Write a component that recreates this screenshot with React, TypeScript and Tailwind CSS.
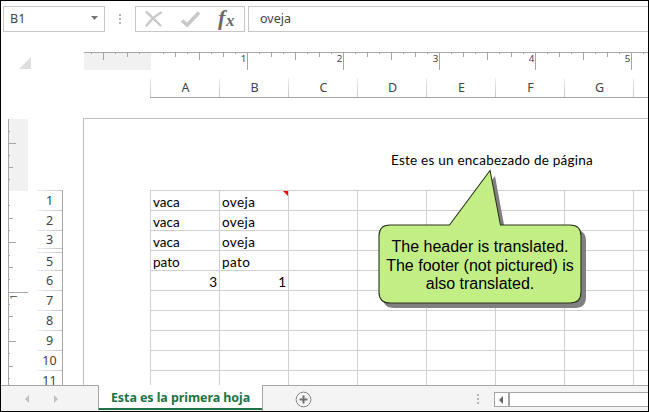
import React from "react";

const columns = ["A", "B", "C", "D", "E", "F", "G", ""];

const rows: { label: string; height: string; cells: string[]; numeric?: boolean }[] = [
  { label: "1", height: "h-5", cells: ["vaca", "oveja"] },
  { label: "2", height: "h-5", cells: ["vaca", "oveja"] },
  { label: "3", height: "h-5", cells: ["vaca", "oveja"] },
  { label: "5", height: "h-5", cells: ["pato", "pato"] },
  { label: "6", height: "h-5", cells: ["3", "1"], numeric: true },
  { label: "7", height: "h-5", cells: [] },
  { label: "8", height: "h-5", cells: [] },
  { label: "9", height: "h-5", cells: [] },
  { label: "10", height: "h-5", cells: [] },
  { label: "11", height: "h-5", cells: [] },
];

// Row headers; the hidden row 4 leaves a thin gap between 3 and 5.
const rowHeaders = [
  { label: "1", size: "h-5" },
  { label: "2", size: "h-5" },
  { label: "3", size: "h-[18px]" },
  { label: "", size: "h-1" },
  { label: "5", size: "h-[18px]" },
  { label: "6", size: "h-5" },
  { label: "7", size: "h-5" },
  { label: "8", size: "h-5" },
  { label: "9", size: "h-5" },
  { label: "10", size: "h-5" },
  { label: "11", size: "h-5" },
];

// Eighth-inch marks, alternating eighth, quarter, eighth, half.
function HorizontalRuler() {
  const ticks = Array.from({ length: 47 }, (_, i) => i - 5);
  return (
    <svg width="564" height="18" className="block" shapeRendering="crispEdges">
      <rect x="0" y="0" width="67" height="18" fill="#f1f1f1" />
      <rect x="0" y="0" width="564" height="1" fill="#a6a6a6" />
      {ticks.map((t) => {
        if (t === 0) return null;
        const h = t > 0 && t % 8 === 0 ? 18 : t % 4 === 0 ? 8 : t % 2 === 0 ? 5 : 2;
        return <rect key={t} x={67 + t * 12} y="0" width="1" height={h} fill="#a6a6a6" />;
      })}
      {[1, 2, 3, 4, 5].map((n) => (
        <text key={n} x={66.3 + n * 96} y="10.3" textAnchor="end" fontSize="9.8" fill="#444" fontFamily="Noto Sans, sans-serif">
          {n}
        </text>
      ))}
    </svg>
  );
}

function VerticalRuler() {
  const ticks = [
    [12, 2], [24, 8], [36, 2], [48, 5], [60, 2], [86, 2], [99, 5], [111, 2], [123, 8], [136, 2],
    [148, 5], [160, 2], [173, 20], [185, 2], [197, 5], [210, 2], [222, 8], [234, 2], [247, 5], [259, 2],
  ];
  return (
    <svg width="20" height="266" className="block" shapeRendering="crispEdges">
      <rect x="0" y="0" width="20" height="72" fill="#f1f1f1" />
      <rect x="0" y="0" width="1" height="266" fill="#a6a6a6" />
      {ticks.map(([y, w]) => (
        <rect key={y} x="0" y={y} width={w} height="1" fill="#a6a6a6" />
      ))}
      <text transform="translate(9 180.5) rotate(-90)" fontSize="9.5" fill="#444" fontFamily="Noto Sans, sans-serif">
        1
      </text>
    </svg>
  );
}

function Dots() {
  return (
    <div className="flex flex-col gap-[2px]">
      <i className="size-[2px] bg-[#b4b4b4]" />
      <i className="size-[2px] bg-[#b4b4b4]" />
      <i className="size-[2px] bg-[#b4b4b4]" />
    </div>
  );
}

function FormulaBar() {
  return (
    <div className="mt-[5px] ml-[2px] flex h-[26px] items-stretch">
      <div className="flex w-[102px] items-center justify-between border border-[#c6c6c6] pr-[6px] pl-[6px] text-[12.5px] text-[#444]">
        <span className="pt-px font-['Noto_Sans',sans-serif]">B1</span>
        <svg width="7" height="4" className="-mt-[3px]"><path d="M0 0h7L3.5 4z" fill="#777" /></svg>
      </div>
      <div className="flex w-[30px] items-center pl-[14px]"><Dots /></div>
      <div className="w-[110px] border border-[#c6c6c6]">
        <svg width="108" height="24" className="block">
          <path d="M10.5 5.2Q16.5 10.5 24.5 18.5M25 5.5Q18 9.5 10.5 18.5" fill="none" stroke="#c8c8c8" strokeWidth="2.4" strokeLinecap="round" />
          <path d="M46 13.5l5.2 4.5L63 5.5" fill="none" stroke="#c8c8c8" strokeWidth="3.6" />
          <text x="82" y="18" fontFamily="Liberation Serif, serif" fontStyle="italic" fontWeight="bold" fontSize="22" fill="#6a6a6a">f</text>
          <text x="90" y="18.5" fontFamily="Liberation Serif, serif" fontStyle="italic" fontWeight="bold" fontSize="17" fill="#6a6a6a">x</text>
        </svg>
      </div>
      <div className="ml-[3px] flex flex-1 items-center border-y border-l border-[#c6c6c6] pt-px pl-[11px] font-['Noto_Sans',sans-serif] text-[12.5px] text-[#444]">
        oveja
      </div>
    </div>
  );
}

function Callout() {
  return (
    <div className="absolute top-[168px] left-[377px] h-[140px] w-[212px]">
      <svg width="212" height="140" className="absolute inset-0">
        <path
          d="M16 61H76L117 7L127 61H197Q208 61 208 72V128Q208 139 197 139H16Q5 139 5 128V72Q5 61 16 61Z"
          fill="#808080"
        />
        <path
          d="M12 56H71.5L112 1.5L122.5 56H192Q203 56 203 67V123Q203 134 192 134H12Q1 134 1 123V67Q1 56 12 56Z"
          fill="#c3ee86"
          stroke="#2b331c"
          strokeWidth="1.1"
        />
      </svg>
      <p className="relative mt-[69px] w-[204px] text-center font-['Liberation_Sans',sans-serif] text-[16px] leading-[18.5px] text-black">
        The header is translated.
        <br />
        The footer (not pictured) is
        <br />
        also translated.
      </p>
    </div>
  );
}

function SheetTabs() {
  return (
    <div className="flex h-[26px] bg-[#f4f4f4]">
      <div className="flex w-[97px] items-center gap-[25px] border-t border-[#a6a6a6] pl-[24px]">
        <svg width="4" height="8"><path d="M4 0v8L0 4z" fill="#c0c0c0" /></svg>
        <svg width="4" height="8"><path d="M0 0v8l4-4z" fill="#c0c0c0" /></svg>
      </div>
      <div className="flex h-[25px] w-[164px] items-center justify-center border-b-2 border-l border-b-[#217346] border-l-[#a6a6a6] bg-white pt-[3px] font-['Noto_Sans',sans-serif] text-[12.5px] font-bold tracking-[-0.08px] whitespace-nowrap text-[#217346]">
        Esta es la primera hoja
      </div>
      <div className="flex flex-1 border-t border-l border-[#a6a6a6]">
        <svg width="17" height="17" className="mt-[5px] ml-[32px]">
          <circle cx="8.5" cy="8.5" r="7.4" fill="none" stroke="#858585" />
          <path d="M4.5 8.5h8M8.5 4.5v8" stroke="#707070" strokeWidth="2" />
        </svg>
        <div className="mt-[8px] ml-[165px]"><Dots /></div>
        <div className="mt-[6px] ml-[15px] flex h-[15px] flex-1 border-y border-l border-[#a6a6a6] bg-white">
          <div className="flex w-[15px] items-center border-r-2 border-[#a6a6a6] pl-[4px]">
            <svg width="4" height="8"><path d="M4 0v8L0 4z" fill="#666" /></svg>
          </div>
        </div>
      </div>
    </div>
  );
}

export default function App() {
  return (
    <div className="relative flex h-[412px] w-[649px] flex-col overflow-hidden border border-black bg-white">
      <FormulaBar />

      <div className="mt-5 flex h-[18px] shrink-0">
        <div className="w-[83px] shrink-0">
          <svg width="12" height="12" className="mt-[5px] ml-[18px]"><path d="M12 0v12H0z" fill="#dfdfdf" /></svg>
        </div>
        <HorizontalRuler />
      </div>

      <div className="mt-2 ml-[149px] flex h-5 shrink-0 overflow-hidden border-b border-[#a6a6a6]">
        {columns.map((c, i) => (
          <div key={i} className="flex w-[69px] shrink-0">
            <div className="w-px bg-linear-to-b from-[#eeeeee] to-[#c6c6c6]" />
            <div className="flex flex-1 items-center justify-center pt-px pl-px font-['Noto_Sans',sans-serif] text-[12.5px] text-[#444]">{c}</div>
          </div>
        ))}
      </div>

      <div className="mt-5 flex h-[267px] shrink-0 overflow-hidden">
        <div className="mt-px ml-[7px]"><VerticalRuler /></div>
        <div className="mt-[72px] ml-[9px] w-[26px] shrink-0 border-r border-[#a6a6a6]">
          {rowHeaders.map((r, i) => (
            <div key={i} className={"flex flex-col " + r.size}>
              <div className="h-px shrink-0 bg-linear-to-r from-[#eeeeee] to-[#c6c6c6]" />
              <div className="flex min-h-0 flex-1 items-center justify-center pt-[2px] font-['Noto_Sans',sans-serif] text-[12.5px] leading-none text-[#444]">{r.label}</div>
            </div>
          ))}
        </div>
        <div className="ml-5 flex-1 overflow-hidden border-t border-l border-[#c2c2c2]">
          <div className="flex h-[71px] pt-[32px] pl-[307px] font-['Lato',sans-serif] text-[13.5px] leading-[18px] tracking-[0.23px] whitespace-nowrap text-black">
            Este es un encabezado de página
          </div>
          <div className="ml-[66px] w-[553px] border-t border-l border-[#d0d0d0]">
            {rows.map((r, ri) => (
              <div key={r.label} className={"flex " + r.height}>
                {columns.map((_, ci) => (
                  <div
                    key={ci}
                    className={
                      "relative w-[69px] shrink-0 border-r border-b border-[#d0d0d0] px-[2px] pt-[2px] font-['Lato',sans-serif] text-[13.5px] leading-[18px] text-black " +
                      (r.numeric ? "text-right" : ci === 1 ? "text-left tracking-[0.4px]" : "text-left")
                    }
                  >
                    {r.cells[ci]}
                    {ri === 0 && ci === 1 && (
                      <svg width="5" height="5" className="absolute top-0 right-0"><path d="M0 0h5v5z" fill="#f00" /></svg>
                    )}
                  </div>
                ))}
              </div>
            ))}
          </div>
        </div>
      </div>

      <SheetTabs />
      <Callout />
    </div>
  );
}
